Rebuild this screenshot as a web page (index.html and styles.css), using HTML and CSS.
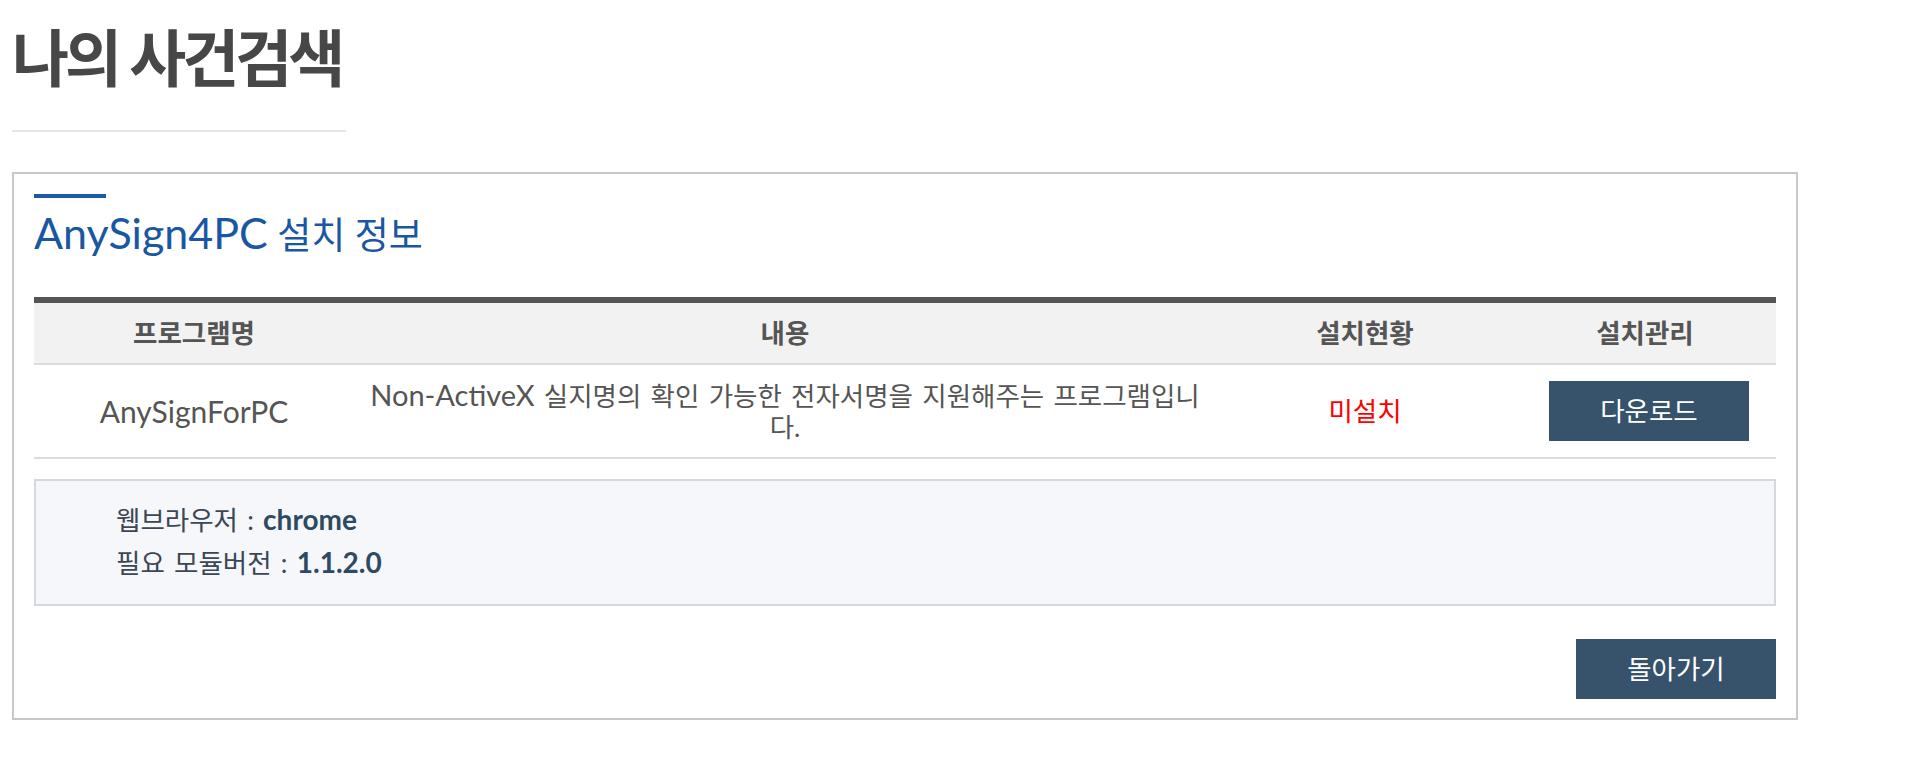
FILE: index.html
```html
<!DOCTYPE html>
<html lang="ko">
<head>
<meta charset="utf-8">
<title>나의 사건검색</title>
<link rel="stylesheet" href="styles.css">
</head>
<body>
<div class="page">
  <div class="page-title">
    <h1>나의 사건검색</h1>
  </div>

  <section class="panel">
    <span class="panel-bar"></span>
    <h2 class="panel-title"><span class="en">AnySign4PC</span> 설치 정보</h2>

    <table class="prog-table">
      <colgroup>
        <col class="col-name">
        <col class="col-desc">
        <col class="col-state">
        <col class="col-manage">
      </colgroup>
      <thead>
        <tr>
          <th>프로그램명</th>
          <th>내용</th>
          <th>설치현황</th>
          <th>설치관리</th>
        </tr>
      </thead>
      <tbody>
        <tr>
          <td class="cell-name">AnySignForPC</td>
          <td class="cell-desc"><span class="en">Non-ActiveX</span> 실지명의 확인 가능한 전자서명을 지원해주는 프로그램입니다.</td>
          <td class="cell-state">미설치</td>
          <td class="cell-manage"><button type="button" class="btn">다운로드</button></td>
        </tr>
      </tbody>
    </table>

    <div class="env-info">
      <p>웹브라우저 : <strong>chrome</strong></p>
      <p>필요 모듈버전 : <strong>1.1.2.0</strong></p>
    </div>

    <div class="panel-actions">
      <button type="button" class="btn">돌아가기</button>
    </div>
  </section>
</div>
</body>
</html>
```

FILE: styles.css
```css
html, body {
  margin: 0;
  padding: 0;
  background: #ffffff;
}

body {
  font-family: Lato, "Noto Sans CJK KR", sans-serif;
  font-size: 26.5px;
  word-spacing: 2.5px;
  color: #555555;
}

.page {
  padding: 0 0 0 12px;
}

.page-title {
  width: 334px;
  padding-top: 27px;
  padding-bottom: 41px;
  border-bottom: 2px solid #e6e6e6;
}

.page-title h1 {
  margin: 0;
  font-size: 62px;
  line-height: 62px;
  font-weight: 700;
  color: #474747;
  letter-spacing: -4px;
  word-spacing: 0;
}

.panel {
  width: 1786px;
  box-sizing: border-box;
  margin-top: 40px;
  border: 2px solid #c8c8c8;
  padding: 20px 20px 19px;
}

.panel-bar {
  display: block;
  width: 72px;
  height: 4px;
  background: #1b5aa6;
}

.panel-title {
  margin: 11px 0 38px;
  font-size: 37px;
  line-height: 48px;
  font-weight: 400;
  color: #1a57a2;
  word-spacing: 0;
}

.panel-title .en {
  font-size: 43px;
}

.prog-table {
  width: 100%;
  table-layout: fixed;
  border-collapse: separate;
  border-spacing: 0;
  border-top: 6px solid #555555;
}

.col-name { width: 320px; }
.col-desc { width: 862px; }
.col-state { width: 298px; }
.col-manage { width: 262px; }

.prog-table th {
  height: 60px;
  padding: 0;
  background: #f2f2f2;
  border-bottom: 2px solid #dcdcdc;
  font-weight: 700;
  color: #555555;
  line-height: 30px;
  text-align: center;
  vertical-align: middle;
}

.prog-table td {
  height: 92px;
  padding: 0 10px;
  border-bottom: 2px solid #dcdcdc;
  text-align: center;
  vertical-align: middle;
  line-height: 31px;
  color: #555555;
}

.prog-table .en {
  font-size: 29px;
}

.prog-table .cell-name {
  font-size: 30px;
}

.prog-table .cell-state {
  color: #ff0000;
}

.prog-table .cell-manage {
  padding-left: 18px;
}

.btn {
  display: inline-block;
  width: 200px;
  height: 60px;
  border: 0;
  padding: 0;
  margin: 0;
  background: #36536b;
  color: #ffffff;
  font-family: inherit;
  font-size: 26.5px;
  line-height: 60px;
  vertical-align: middle;
  cursor: pointer;
}

.env-info {
  margin-top: 20px;
  border: 2px solid #d5d8de;
  background: #f5f7fb;
  padding: 17px 80px 20px;
}

.env-info p {
  margin: 0;
  line-height: 42px;
  color: #3b4755;
}

.env-info strong {
  font-size: 28px;
  font-weight: 700;
  color: #2d4a63;
}

.panel-actions {
  display: flex;
  justify-content: flex-end;
  margin-top: 33px;
}
```
